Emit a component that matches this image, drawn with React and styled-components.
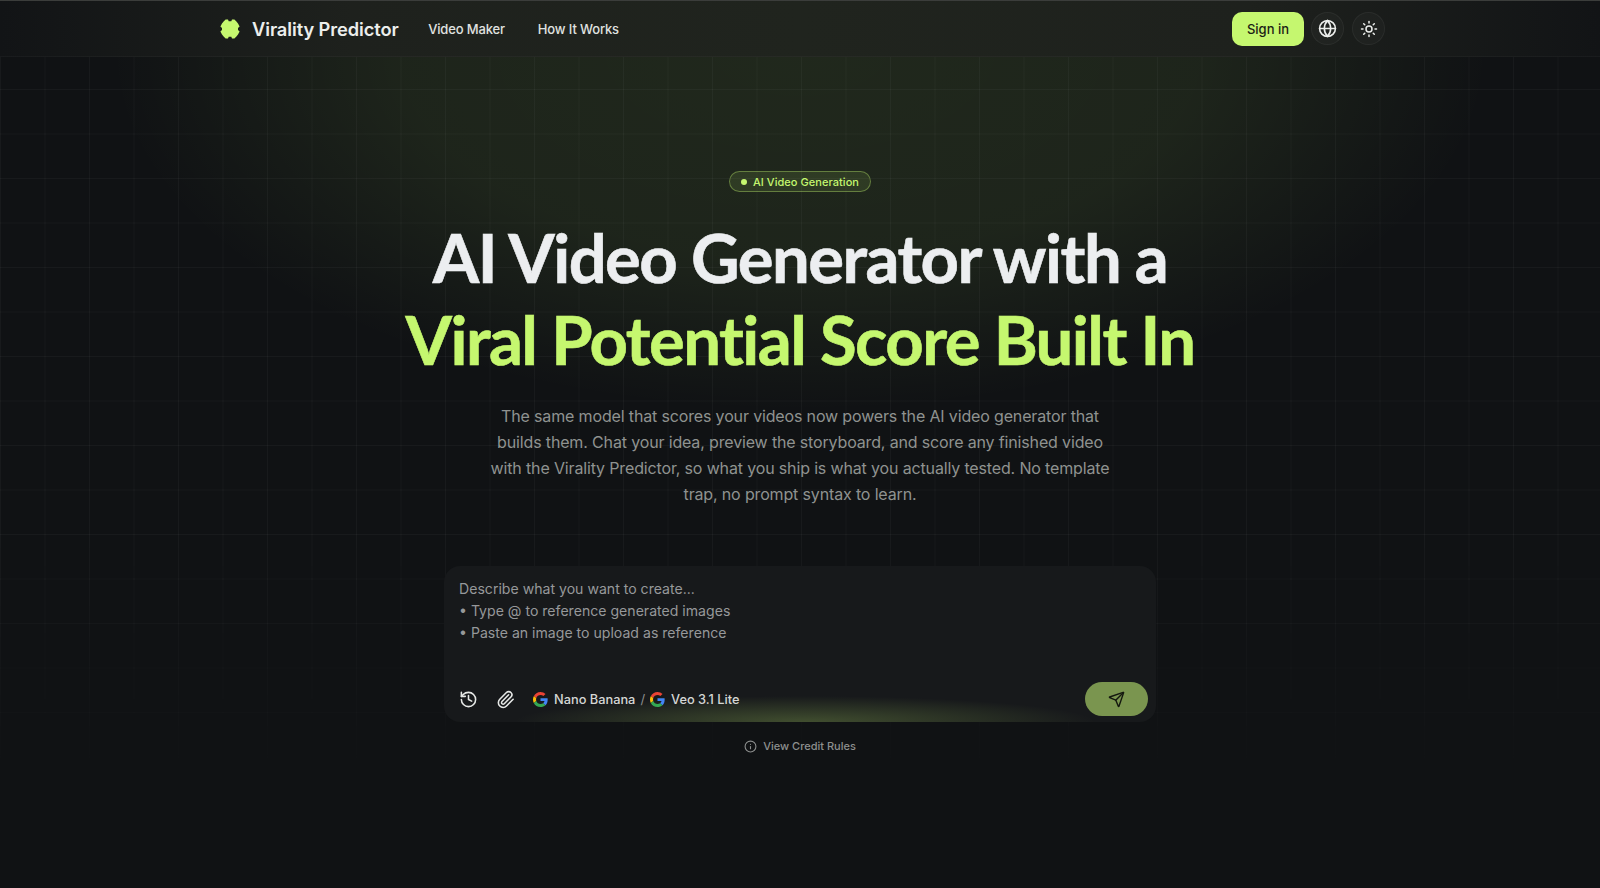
import React from "react";
import styled, { createGlobalStyle } from "styled-components";
import { Globe, Sun, History, Paperclip, Send, Info } from "lucide-react";

const Global = createGlobalStyle`
  html, body { margin: 0; padding: 0; background: #101214; }
  * { box-sizing: border-box; }
  body { font-family: Inter, "Liberation Sans", sans-serif; overflow: hidden; }
`;

const Page = styled.div`
  position: relative;
  height: 888px;
  overflow: hidden;
  border-top: 1px solid #3b3d3b;
  background:
    radial-gradient(ellipse 690px 360px at 50% 50px, rgba(190, 255, 110, 0.095) 0%, rgba(190, 255, 110, 0.08) 58%, rgba(190, 255, 110, 0) 100%),
    #101214;
  &::before {
    content: "";
    position: absolute;
    inset: -1px 0 0 0;
    background-image:
      linear-gradient(to right, rgba(255, 255, 255, 0.035) 1px, transparent 1px),
      linear-gradient(to bottom, rgba(255, 255, 255, 0.035) 1px, transparent 1px);
    background-size: 44.5px 44.5px;
    -webkit-mask-image: linear-gradient(to bottom, #000 0%, #000 60%, transparent 90%);
    mask-image: linear-gradient(to bottom, #000 0%, #000 60%, transparent 90%);
  }
`;

const Nav = styled.header`
  position: relative;
  height: 56px;
  display: flex;
  align-items: center;
  justify-content: space-between;
  padding: 0 215px 0 220px;
  background: linear-gradient(to right, #121416 0%, #1e211d 22%, #20241e 50%, #1e211d 78%, #121416 100%);
  border-bottom: 1px solid rgba(255, 255, 255, 0.03);
`;

const NavLeft = styled.div`
  display: flex;
  align-items: center;
`;

const Brand = styled.div`
  display: flex;
  align-items: center;
  gap: 12px;
  margin-right: 29.5px;
  font-size: 18.3px;
  font-weight: 600;
  letter-spacing: -0.1px;
  color: #eceeec;
`;

const NavLink = styled.a`
  font-size: 13px;
  font-weight: 500;
  letter-spacing: -0.15px;
  color: #e0e2e0;
  margin-right: 33px;
`;

const NavRight = styled.div`
  display: flex;
  align-items: center;
`;

const SignIn = styled.button`
  width: 72px;
  height: 34px;
  border: 0;
  border-radius: 10px;
  background: #c5f76f;
  color: #1b2115;
  font-family: Inter, sans-serif;
  font-size: 13px;
  font-weight: 500;
  padding: 0;
`;

const IconButton = styled.button`
  width: 33px;
  height: 33px;
  margin-left: ${(p) => p.$ml}px;
  border: 1px solid rgba(255, 255, 255, 0.05);
  border-radius: 50%;
  background: rgba(255, 255, 255, 0.025);
  color: #eceeec;
  display: flex;
  align-items: center;
  justify-content: center;
  padding: 0;
`;

const Hero = styled.main`
  position: relative;
  display: flex;
  flex-direction: column;
  align-items: center;
  padding-top: 114px;
`;

const Badge = styled.div`
  height: 21px;
  width: 142px;
  display: flex;
  align-items: center;
  justify-content: center;
  gap: 6px;
  border: 1px solid rgba(197, 247, 111, 0.36);
  border-radius: 999px;
  background: rgba(197, 247, 111, 0.1);
  color: #c5f76f;
  font-size: 11px;
  font-weight: 500;
  letter-spacing: 0.05px;
`;

const Dot = styled.span`
  width: 6px;
  height: 6px;
  border-radius: 50%;
  background: #c5f76f;
`;

const Title = styled.h1`
  margin: 24px 0 0;
  text-align: center;
  font-family: Lato, sans-serif;
  font-size: 67px;
  line-height: 82px;
  font-weight: 700;
  letter-spacing: -1.55px;
  color: #eceef0;
  -webkit-text-stroke: 0.6px currentColor;
`;

const Accent = styled.span`
  display: block;
  color: #c5f76f;
`;

const Lead = styled.p`
  margin: 23px 0 0;
  width: 626px;
  text-align: center;
  font-size: 16px;
  letter-spacing: -0.15px;
  line-height: 26px;
  color: #8f9290;
`;

const Composer = styled.section`
  position: relative;
  margin-top: 59px;
  width: 712px;
  height: 156px;
  border-radius: 16px;
  background: #17191b;
  overflow: hidden;
  display: flex;
  flex-direction: column;
  justify-content: space-between;
  padding: 12px 8px 6px 15px;
  &::after {
    content: "";
    position: absolute;
    left: 70px;
    right: 60px;
    bottom: -26px;
    height: 52px;
    background: radial-gradient(ellipse 50% 50% at 50% 50%, rgba(197, 247, 111, 0.24), rgba(197, 247, 111, 0) 100%);
  }
`;

const Placeholder = styled.div`
  font-size: 14.1px;
  line-height: 22.2px;
  color: #96989a;
`;

const Toolbar = styled.div`
  position: relative;
  z-index: 1;
  display: flex;
  align-items: center;
  height: 34px;
`;

const Tool = styled.span`
  display: flex;
  color: #e6e8e6;
  margin-right: 18px;
`;

const Model = styled.span`
  display: flex;
  align-items: center;
  gap: 6px;
  font-size: 12.8px;
  font-weight: 500;
  color: #d4d6d4;
`;

const Slash = styled.span`
  margin: 0 5px;
  font-size: 13px;
  color: #8d8f8d;
`;

const SendButton = styled.button`
  margin-left: auto;
  width: 63px;
  height: 34px;
  border: 0;
  border-radius: 17px;
  background: #7a954f;
  color: #14180f;
  display: flex;
  align-items: center;
  justify-content: center;
  padding: 0;
`;

const CreditRules = styled.div`
  margin-top: 17px;
  display: flex;
  align-items: center;
  gap: 6px;
  font-size: 11px;
  font-weight: 500;
  color: #8d8f8e;
`;

const Logo = () => (
  <svg width="20" height="20" viewBox="0 0 20 20" aria-hidden="true">
    <path
      fill="#c5f76f"
      d="M5.6 .6H8L8.7 2.2H11.3L12 .6H14.4L16.4 2.4L18 4.6L19.6 7.6L18 9V11L19.6 12.4L18 15.4L16.4 17.6L14.4 19.4H12L11.3 17.8H8.7L8 19.4H5.6L3.6 17.6L2 15.4L.4 12.4L2 11V9L.4 7.6L2 4.6L3.6 2.4Z"
    />
  </svg>
);

const GoogleG = () => (
  <svg width="15" height="15" viewBox="0 0 48 48" aria-hidden="true">
    <path fill="#EA4335" d="M24 9.5c3.5 0 6.7 1.2 9.2 3.6l6.9-6.9C35.9 2.4 30.5 0 24 0 14.6 0 6.5 5.4 2.6 13.2l8 6.2C12.5 13.6 17.8 9.5 24 9.5z" />
    <path fill="#4285F4" d="M46.9 24.5c0-1.6-.1-3.1-.4-4.5H24v9h12.9c-.6 3-2.2 5.5-4.8 7.2l7.7 6c4.5-4.2 7.1-10.3 7.1-17.7z" />
    <path fill="#FBBC05" d="M10.5 28.6c-.5-1.4-.8-3-.8-4.6s.3-3.2.8-4.6l-8-6.2C.9 16.5 0 20.1 0 24s.9 7.5 2.6 10.8l7.9-6.2z" />
    <path fill="#34A853" d="M24 48c6.5 0 11.9-2.1 15.9-5.8l-7.7-6c-2.2 1.5-4.9 2.3-8.2 2.3-6.2 0-11.5-4.2-13.4-9.9l-8 6.2C6.5 42.6 14.6 48 24 48z" />
  </svg>
);

export default function App() {
  return (
    <Page>
      <Global />
      <Nav>
        <NavLeft>
          <Brand>
            <Logo />
            <span>Virality Predictor</span>
          </Brand>
          <NavLink>Video Maker</NavLink>
          <NavLink>How It Works</NavLink>
        </NavLeft>
        <NavRight>
          <SignIn>Sign in</SignIn>
          <IconButton $ml={7}><Globe size={19} /></IconButton>
          <IconButton $ml={8}><Sun size={18} /></IconButton>
        </NavRight>
      </Nav>
      <Hero>
        <Badge><Dot />AI Video Generation</Badge>
        <Title>
          AI Video Generator with a
          <Accent>Viral Potential Score Built In</Accent>
        </Title>
        <Lead>
          The same model that scores your videos now powers the AI video generator that builds them. Chat your idea, preview the storyboard, and score any finished video with the Virality Predictor, so what you ship is what you actually tested. No template trap, no prompt syntax to learn.
        </Lead>
        <Composer>
          <Placeholder>
            Describe what you want to create...<br />
            • Type @ to reference generated images<br />
            • Paste an image to upload as reference
          </Placeholder>
          <Toolbar>
            <Tool><History size={19} /></Tool>
            <Tool><Paperclip size={19} /></Tool>
            <Model><GoogleG />Nano Banana</Model>
            <Slash>/</Slash>
            <Model><GoogleG />Veo 3.1 Lite</Model>
            <SendButton><Send size={17} /></SendButton>
          </Toolbar>
        </Composer>
        <CreditRules><Info size={13} />View Credit Rules</CreditRules>
      </Hero>
    </Page>
  );
}
